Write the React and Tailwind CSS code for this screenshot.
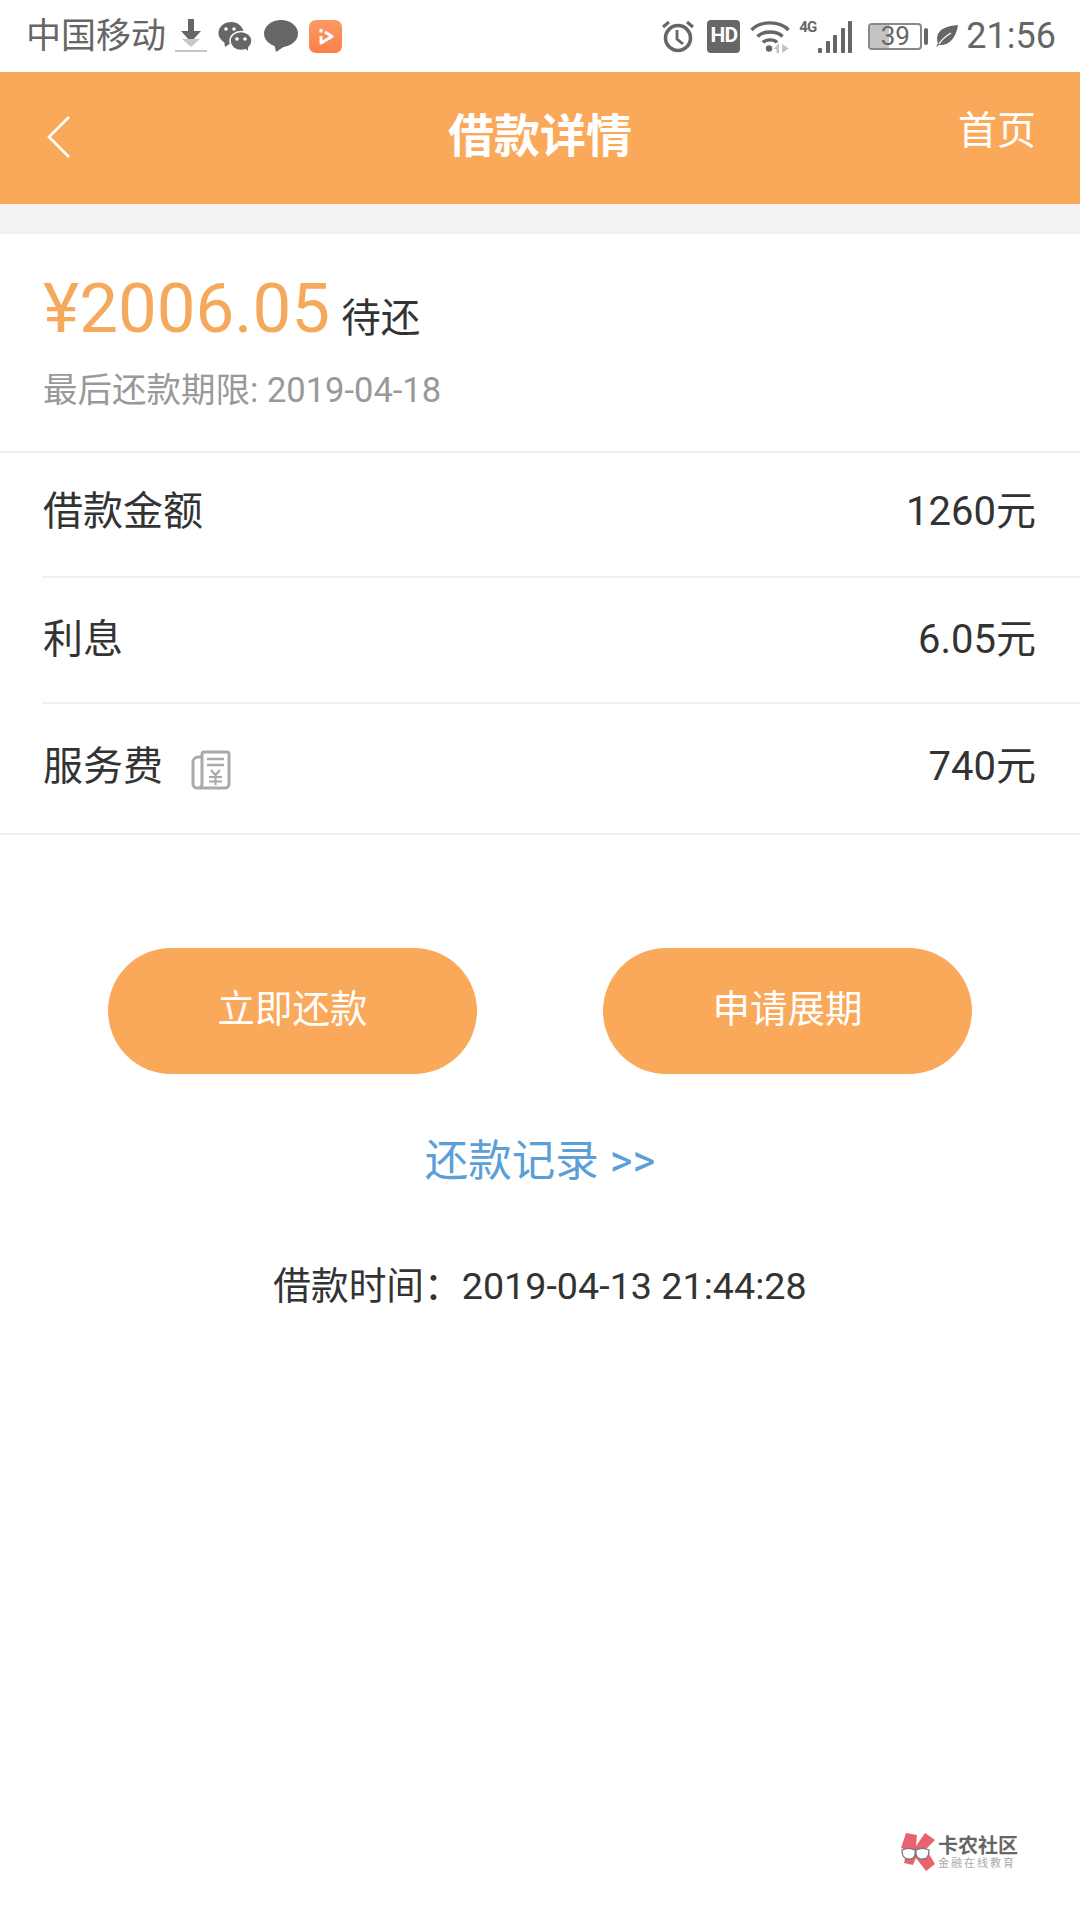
import React from 'react';

const font = "font-['Roboto','Noto_Sans_CJK_SC',sans-serif]";

const DownloadIcon = () => (
  <svg width="34" height="36" viewBox="0 0 34 36" className="ml-[8px]">
    <path d="M14 1h6v12h7L17 24 7 13h7z" fill="#666" />
    <path d="M8 21h18l-9 8z" fill="#c8c8c8" />
    <rect x="1" y="32" width="32" height="2" fill="#c4c4c4" />
  </svg>
);

const WechatIcon = () => (
  <svg width="34" height="30" viewBox="0 0 34 30" className="ml-[10px]">
    <ellipse cx="13" cy="12" rx="12.500" ry="11" fill="#666" />
    <path d="M6 19l1 7 6-4z" fill="#666" />
    <ellipse cx="23" cy="20" rx="11" ry="9.500" fill="#666" stroke="#fff" strokeWidth="1.500" />
    <path d="M27 27l3 3v-5z" fill="#666" />
    <circle cx="8" cy="8" r="1.800" fill="#fff" />
    <circle cx="16" cy="8" r="1.800" fill="#fff" />
    <circle cx="19" cy="18" r="1.800" fill="#fff" />
    <circle cx="27" cy="18" r="1.800" fill="#fff" />
  </svg>
);

const ChatIcon = () => (
  <svg width="34" height="32" viewBox="0 0 34 32" className="ml-[12px]">
    <ellipse cx="17" cy="13.500" rx="17" ry="13.500" fill="#666" />
    <path d="M10 23l2 9 9-6z" fill="#666" />
  </svg>
);

const VideoIcon = () => (
  <div className="ml-[11px] w-[33px] h-[33px] rounded-[7px] bg-linear-to-b from-[#fb9a68] to-[#fb7f48] flex items-center justify-center">
    <svg width="20" height="20" viewBox="0 0 20 20">
      <path d="M5 3v3.500M5 10v7l11-6.500L9 6" fill="none" stroke="#fff" strokeWidth="3" strokeLinejoin="round" />
    </svg>
  </div>
);

const AlarmIcon = () => (
  <svg width="34" height="34" viewBox="0 0 34 34">
    <circle cx="17" cy="19" r="12.500" fill="none" stroke="#666" strokeWidth="3.600" />
    <path d="M16 11v9l6 5" fill="none" stroke="#666" strokeWidth="2.800" />
    <path d="M2 8l6-5M32 8l-6-5" stroke="#666" strokeWidth="3" />
  </svg>
);

const WifiIcon = () => (
  <svg width="40" height="34" viewBox="0 0 40 34" className="ml-[10px]">
    <path d="M1.500 11C10 1.500 30 1.500 38.500 11" fill="none" stroke="#666" strokeWidth="3.400" />
    <path d="M7.500 17.500C13 11.500 27 11.500 32.500 17.500" fill="none" stroke="#666" strokeWidth="3.400" />
    <path d="M13 23.500c3-3.500 11-3.500 14 0" fill="none" stroke="#666" strokeWidth="3.400" />
    <circle cx="19" cy="29.500" r="3.200" fill="#666" />
    <path d="M29 24v10h-2.500v-4h-3zM32 25l7 4.500-7 4.500z" fill="#c4c4c4" />
  </svg>
);

const SignalIcon = () => (
  <div className="ml-[9px] w-[54px] h-[34px] flex items-end">
    <span className="w-[19px] self-start text-[15px] leading-[16px] tracking-[-1px] font-bold text-[#666]">4G</span>
    <div className="flex items-end gap-[3.500px]">
      <span className="w-[4px] h-[5px] rounded-[1px] bg-[#666]" />
      <span className="w-[4px] h-[12px] rounded-[1px] bg-[#666]" />
      <span className="w-[4px] h-[18px] rounded-[1px] bg-[#666]" />
      <span className="w-[4px] h-[25px] rounded-[1px] bg-[#666]" />
      <span className="w-[4px] h-[32px] rounded-[1px] bg-[#666]" />
    </div>
  </div>
);

const LeafIcon = () => (
  <svg width="24" height="24" viewBox="0 0 24 24" className="ml-[7px]">
    <path d="M23 1C13 2 3 4 2 14c0 3 1 5 1 5l-2 4 3-2c8 1 17-5 19-20z" fill="#666" />
    <path d="M4 20c3-5 7-8 12-11" stroke="#fff" strokeWidth="1.300" fill="none" />
  </svg>
);

const BillIcon = () => (
  <svg width="40" height="40" viewBox="0 0 40 40" className="ml-[28px] mt-[6px]">
    <path d="M11 7H7a5 5 0 0 0-5 5v22a4 4 0 0 0 4 4h28a4 4 0 0 0 4-4V4a2 2 0 0 0-2-2H13a2 2 0 0 0-2 2v30a4 4 0 0 1-4 4" fill="none" stroke="#aaa" strokeWidth="3" />
    <path d="M16 9h17M16 15h17" stroke="#aaa" strokeWidth="2.400" />
    <path d="M20 20l4.500 5 4.500-5M18 27h13M18 31.500h13M24.500 25v10" fill="none" stroke="#aaa" strokeWidth="2.200" />
  </svg>
);

const LogoIcon = () => (
  <svg width="36" height="40" viewBox="0 0 36 40">
    <path d="M6 1l11 2-1 11L25 1l10 7-9 9 9 15-9 7-10-13-3 7-9-2 3-13-6-2z" fill="#e8636f" />
    <path d="M2 18c4-2 9-2 13 0 1 7-2 10-7 9-4 0-6-4-6-9zM16 18c4-2 9-2 13 0 0 6-2 9-6 9-5 1-8-3-7-9z" fill="#fff" stroke="#777" strokeWidth="1.300" />
  </svg>
);

const Row = ({ label, value, icon, className }) => (
  <div className={`flex items-center justify-between ml-[42px] pl-[1px] pr-[44px] ${className}`}>
    <div className="flex items-center text-[40px] text-[#333]">
      <span>{label}</span>
      {icon}
    </div>
    <span className="text-[40px] text-[#333]">{value}</span>
  </div>
);

export default function App() {
  return (
    <div className={`w-[1080px] h-[1920px] bg-white flex flex-col overflow-hidden ${font}`}>
      {/* status bar */}
      <div className="h-[72px] pl-[26px] pr-[24px] flex items-center justify-between shrink-0">
        <div className="flex items-center">
          <span className="text-[35px] leading-none text-[#666]">中国移动</span>
          <DownloadIcon />
          <WechatIcon />
          <ChatIcon />
          <VideoIcon />
        </div>
        <div className="flex items-center">
          <AlarmIcon />
          <div className="ml-[12px] w-[33px] h-[33px] rounded-[4px] bg-[#666] text-white text-[21px] tracking-[-1px] font-bold flex items-center justify-center">HD</div>
          <WifiIcon />
          <SignalIcon />
          <div className="ml-[15px] relative w-[54px] h-[27px] rounded-[4px] border-2 border-[#888] flex items-center justify-center overflow-hidden">
            <span className="absolute left-0 top-0 bottom-0 w-[19px] bg-[#c4c4c4]" />
            <span className="relative text-[26px] leading-none text-[#666]">39</span>
          </div>
          <span className="ml-[2px] w-[4px] h-[17px] rounded-[2px] bg-[#666]" />
          <LeafIcon />
          <span className="ml-[7px] text-[36px] leading-none text-[#666]">21:56</span>
        </div>
      </div>

      {/* header */}
      <div className="h-[132px] bg-[#faa95a] relative flex items-center justify-center shrink-0">
        <svg width="26" height="44" viewBox="0 0 26 44" className="absolute left-[46px] top-[43px]">
          <path d="M23 2L3 22l20 20" fill="none" stroke="#fff" strokeWidth="2.600" />
        </svg>
        <span className="text-[46px] font-bold text-white leading-none mb-[4px]">借款详情</span>
        <span className="absolute right-[44px] top-[40px] text-[39px] leading-none text-white">首页</span>
      </div>
      <div className="h-[30px] bg-[#f2f2f2] shrink-0" />

      {/* summary */}
      <div className="h-[219px] pl-[43px] pt-[38px] border-b-2 border-[#f0f0f0] shrink-0">
        <div className="flex items-baseline h-[74px]">
          <span className="text-[69px] leading-[74px] text-[#f5a95c]">¥2006.05</span>
          <span className="ml-[11px] text-[39.500px] leading-none text-[#333]">待还</span>
        </div>
        <div className="mt-[22px] text-[34.500px] leading-[44px] text-[#999]">最后还款期限: 2019-04-18</div>
      </div>

      {/* rows */}
      <div className="border-b-2 border-[#f0f0f0] shrink-0">
        <Row label="借款金额" value="1260元" className="h-[125px] pb-[6px] border-b-2 border-[#f0f0f0]" />
        <Row label="利息" value="6.05元" className="h-[126px] border-b-2 border-[#f0f0f0]" />
        <Row label="服务费" value="740元" icon={<BillIcon />} className="h-[129px] pb-[4px]" />
      </div>

      {/* actions */}
      <div className="mt-[113px] flex justify-center gap-[126px]">
        <button className="w-[369px] h-[126px] pb-[3px] rounded-[63px] bg-[#faa95a] text-white text-[37.500px]">立即还款</button>
        <button className="w-[369px] h-[126px] pb-[3px] rounded-[63px] bg-[#faa95a] text-white text-[37.500px]">申请展期</button>
      </div>

      <div className="mt-[58px] text-center text-[43.500px] leading-[60px] text-[#5b9fd9]">还款记录 &gt;&gt;</div>
      <div className="mt-[64px] text-center text-[37.700px] leading-[60px] text-[#333]">借款时间：2019-04-13 21:44:28</div>

      {/* watermark */}
      <div className="mt-auto mb-[48px] mr-[62px] self-end flex items-center">
        <LogoIcon />
        <div className="ml-[2px] flex flex-col">
          <span className="text-[20px] leading-[22px] font-bold text-[#666]">卡农社区</span>
          <span className="text-[11px] leading-[13px] tracking-[2px] text-[#aaa]">金融在线教育</span>
        </div>
      </div>
    </div>
  );
}
